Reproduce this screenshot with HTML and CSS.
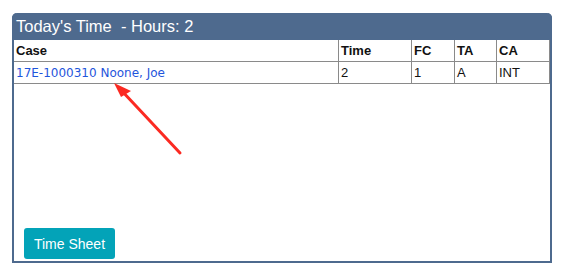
FILE: index.html
```html
<!doctype html>
<html>
<head>
  <link rel="stylesheet" href="styles.css">
</head>
<body>
  <div class="page">
    <div class="panel">
      <div class="panelHead">Today's Time &nbsp;- Hours: 2</div>
      <div class="panelBody">
        <table class="timeTable">
          <tr>
            <th>Case</th>
            <th class="colTime">Time</th>
            <th class="colFc">FC</th>
            <th class="colTa">TA</th>
            <th class="colCa">CA</th>
          </tr>
          <tr>
            <td><a href="#" class="caseLink">17E-1000310 Noone, Joe</a></td>
            <td>2</td>
            <td>1</td>
            <td>A</td>
            <td>INT</td>
          </tr>
        </table>
        <button class="sheetBtn">Time Sheet</button>
      </div>
    </div>
  </div>

  <svg class="arrow" width="574" height="274" viewBox="0 0 574 274">
    <line x1="180" y1="153" x2="121" y2="90" stroke="#fb2a22" stroke-width="3" stroke-linecap="round"/>
    <polygon points="114,83 131,91 121,97" fill="#fb2a22"/>
  </svg>
</body>
</html>
```

FILE: styles.css
```css
body{
  margin:0;
  background:#fff;
  font-family:"Liberation Sans", Arial, sans-serif;
}
.page{
  padding:13px 0 0 12px;
}
.panel{
  width:536px;
  height:248px;
  border:2px solid #4e6a8e;
  border-top:none;
  border-radius:5px 5px 0 0;
  display:flex;
  flex-direction:column;
}
.panelHead{
  background:#4e6a8e;
  color:#fff;
  font-size:16.5px;
  height:27px;
  line-height:27px;
  margin:0 -2px;
  padding-left:4px;
  border-radius:5px 5px 0 0;
}
.panelBody{
  flex:1;
  display:flex;
  flex-direction:column;
  justify-content:space-between;
}
.timeTable{
  width:536px;
  border-collapse:collapse;
  font-size:13px;
  color:#111;
}
.timeTable th, .timeTable td{
  border:1px solid #8a8a8a;
  height:21px;
  padding:0 2px;
  text-align:left;
}
.timeTable th{
  font-weight:bold;
}
.timeTable tr:first-child th{
  border-top:none;
}
.timeTable th:first-child, .timeTable td:first-child{
  border-left:none;
}
.colTime{ width:68px; }
.colFc{ width:38px; }
.colTa{ width:37px; }
.colCa{ width:48px; }
.caseLink{
  color:#1f55dc;
  text-decoration:none;
  font-family:"DejaVu Sans", Verdana, sans-serif;
  font-size:12px;
}
.sheetBtn{
  align-self:flex-start;
  margin:0 0 2px 10px;
  background:#03a3b8;
  color:#fff;
  border:none;
  border-radius:3px;
  width:91px;
  height:31px;
  font-family:"Liberation Sans", Arial, sans-serif;
  font-size:14px;
  padding:0;
}
.arrow{
  position:absolute;
  left:0;
  top:0;
  pointer-events:none;
}
```
